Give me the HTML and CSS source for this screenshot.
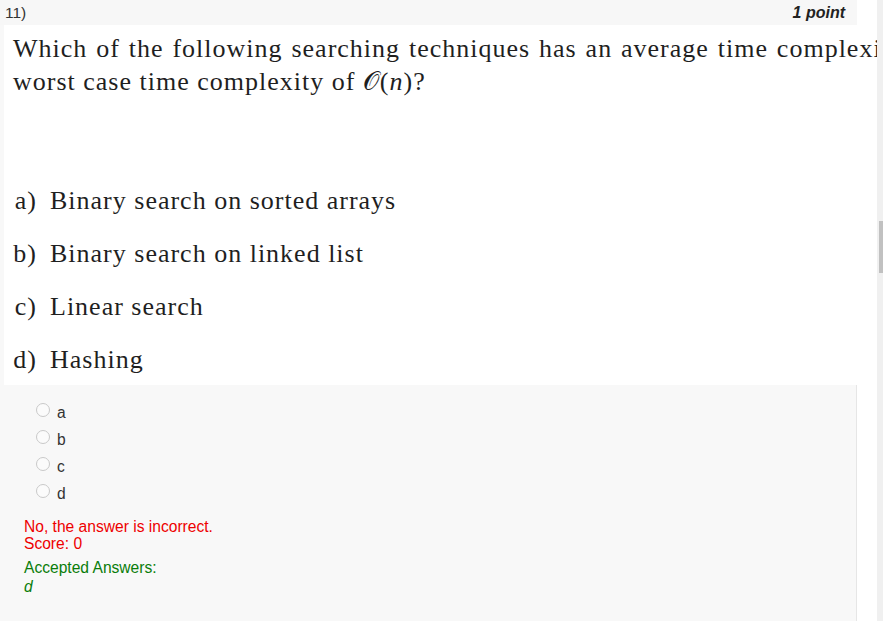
FILE: index.html
```html
<!DOCTYPE html>
<html>
<head>
<meta charset="utf-8">
<link rel="stylesheet" href="styles.css">
</head>
<body>
<div class="viewport">
  <div class="quiz">
    <div class="head">
      <span class="qnum">11)</span>
      <span class="points">1 point</span>
    </div>
    <div class="question">
      <div class="qline qline1">Which of the following searching techniques has an average time complexity of 𝒪(log <i>n</i>) and a</div>
      <div class="qline">worst case time complexity of 𝒪(<i>n</i>)?</div>
      <ol class="choices">
        <li><span class="lab">a)</span>Binary search on sorted arrays</li>
        <li><span class="lab">b)</span>Binary search on linked list</li>
        <li><span class="lab">c)</span>Linear search</li>
        <li><span class="lab">d)</span>Hashing</li>
      </ol>
    </div>
    <div class="panel">
      <div class="radios">
        <label class="radio"><span class="dot"></span>a</label>
        <label class="radio"><span class="dot"></span>b</label>
        <label class="radio"><span class="dot"></span>c</label>
        <label class="radio"><span class="dot"></span>d</label>
      </div>
      <div class="wrong">No, the answer is incorrect.<br>Score: 0</div>
      <div class="accepted">Accepted Answers:<br><i>d</i></div>
    </div>
  </div>
  <div class="scrollbar"><div class="thumb"></div></div>
</div>
</body>
</html>
```
FILE: styles.css
```css
html, body {
  margin: 0;
  padding: 0;
  background: #ffffff;
  overflow: hidden;
}
.viewport {
  display: flex;
  width: 883px;
  height: 621px;
  overflow: hidden;
}
.quiz {
  width: 857px;
  flex: 0 0 857px;
  background: #f8f8f8;
  font-family: "Liberation Sans", Arial, sans-serif;
  min-width: 0;
}
.head {
  height: 25px;
  display: flex;
  justify-content: space-between;
  align-items: flex-start;
  padding: 0 12px 0 5px;
  background: #f7f7f7;
  color: #333;
}
.qnum {
  font-size: 15.5px;
  line-height: 26px;
}
.points {
  font-size: 16px;
  font-weight: bold;
  font-style: italic;
  line-height: 26px;
  color: #222;
}
.question {
  margin-left: 4px;
  width: 873px;
  height: 360px;
  overflow: hidden;
  background: #ffffff;
  padding: 7px 0 0 9px;
  box-sizing: border-box;
  font-family: "Liberation Serif", "Times New Roman", serif;
  font-size: 26px;
  color: #1f1f1f;
}
.qline {
  line-height: 33px;
  height: 33px;
  white-space: nowrap;
  letter-spacing: 1px;
}
.qline1 {
  word-spacing: 1.4px;
}
.choices {
  list-style: none;
  margin: 76px 0 0 0;
  padding: 0;
}
.choices li {
  line-height: 53px;
  height: 53px;
  white-space: nowrap;
  letter-spacing: 1px;
}
.lab {
  display: inline-block;
  width: 28px;
  margin-left: -4px;
  margin-right: 13px;
  text-align: right;
}
.panel {
  background: #f8f8f8;
  border-right: 1px solid #e6e6e6;
  padding: 14px 0 40px 24px;
  height: 236px;
  box-sizing: border-box;
  font-size: 15.6px;
}
.radios {
  margin-left: 12px;
}
.radio {
  display: flex;
  align-items: flex-start;
  height: 27px;
  line-height: 27px;
  color: #333;
}
.dot {
  width: 12px;
  height: 12px;
  margin-top: 4px;
  margin-right: 7px;
  border: 1px solid #c9c9c9;
  border-radius: 50%;
  background: #fbfbfb;
}
.wrong {
  margin-top: 11px;
  line-height: 17px;
  color: #ee0000;
}
.accepted {
  margin-top: 6px;
  line-height: 19px;
  color: #0a7d0a;
}
.scrollbar {
  margin-left: 20px;
  width: 6px;
  flex: 0 0 6px;
  background: #f0f0f0;
}
.thumb {
  margin: 221px 0 0 2px;
  width: 4px;
  height: 52px;
  background: #c1c1c1;
}
```
